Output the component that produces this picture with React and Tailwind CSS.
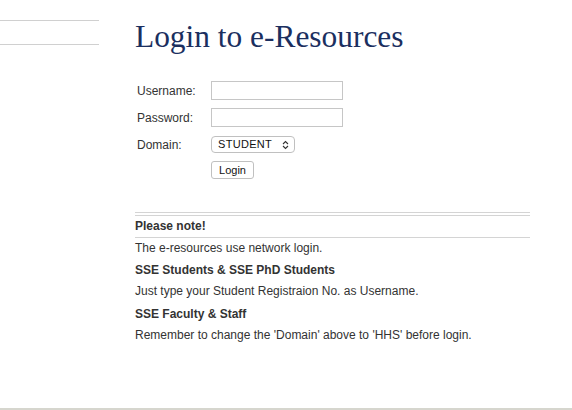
export default function App() {
  const sans = { fontFamily: '"Liberation Sans", Arial, sans-serif' };
  return (
    <div className="relative w-[572px] h-[410px] bg-white overflow-hidden" style={sans}>
      <div className="flex">
        <div className="w-[99px] shrink-0 pt-[20px]">
          <div className="h-[25px] border-t border-b border-[#d0d0d0]" />
        </div>
        <div className="ml-[36px] w-[395px] text-[#333] text-[12px]">
          <h1
            className="text-[31.4px] leading-[36px] text-[#1b2f5f] mt-[19px] ml-[0px]"
            style={{ fontFamily: '"Liberation Serif", "Times New Roman", serif' }}
          >
            Login to e-Resources
          </h1>
          <div className="mt-[26px] ml-[2px] grid grid-cols-[74px_auto] gap-y-[8px] items-center">
            <div className="leading-[19px] pt-[1px] h-[19px]">Username:</div>
            <div className="w-[132px] h-[19px] border border-[#c6c6c6] bg-white" />
            <div className="leading-[19px] pt-[1px] h-[19px]">Password:</div>
            <div className="w-[132px] h-[19px] border border-[#c6c6c6] bg-white" />
            <div className="leading-[16px] mt-[1px]">Domain:</div>
            <div className="mt-[1px] w-[84px] h-[17px] border border-[#c0c0c0] rounded-[4px] bg-white flex items-center justify-between pl-[6px] pr-[5px] text-[11px] text-[#111]">
              <span className="tracking-[0.3px]">STUDENT</span>
              <svg width="7" height="10" viewBox="0 0 7 10" fill="none" stroke="#333" strokeWidth="1.1">
                <path d="M1 4 L3.5 1.5 L6 4" />
                <path d="M1 6 L3.5 8.5 L6 6" />
              </svg>
            </div>
            <div />
            <div className="w-[43px] h-[18px] border border-[#c0c0c0] rounded-[3px] bg-white flex items-center justify-center text-[11px] text-[#111] mt-[0px]">
              Login
            </div>
          </div>
          <div className="mt-[33px] border-t border-b border-[#d4d4d4] h-[4px]" />
          <div className="font-bold leading-[21px] border-b border-[#d4d4d4]">Please note!</div>
          <div className="leading-[20px]">The e-resources use network login.</div>
          <div className="font-bold leading-[22px] mt-[1px]">SSE Students &amp; SSE PhD Students</div>
          <div className="leading-[21px]">Just type your Student Registraion No. as Username.</div>
          <div className="font-bold leading-[22px] mt-[1px]">SSE Faculty &amp; Staff</div>
          <div className="leading-[21px]">Remember to change the 'Domain' above to 'HHS' before login.</div>
        </div>
      </div>
      <div className="absolute left-0 right-0 bottom-0 h-[2px] bg-[#d6d6ce]" />
    </div>
  );
}
